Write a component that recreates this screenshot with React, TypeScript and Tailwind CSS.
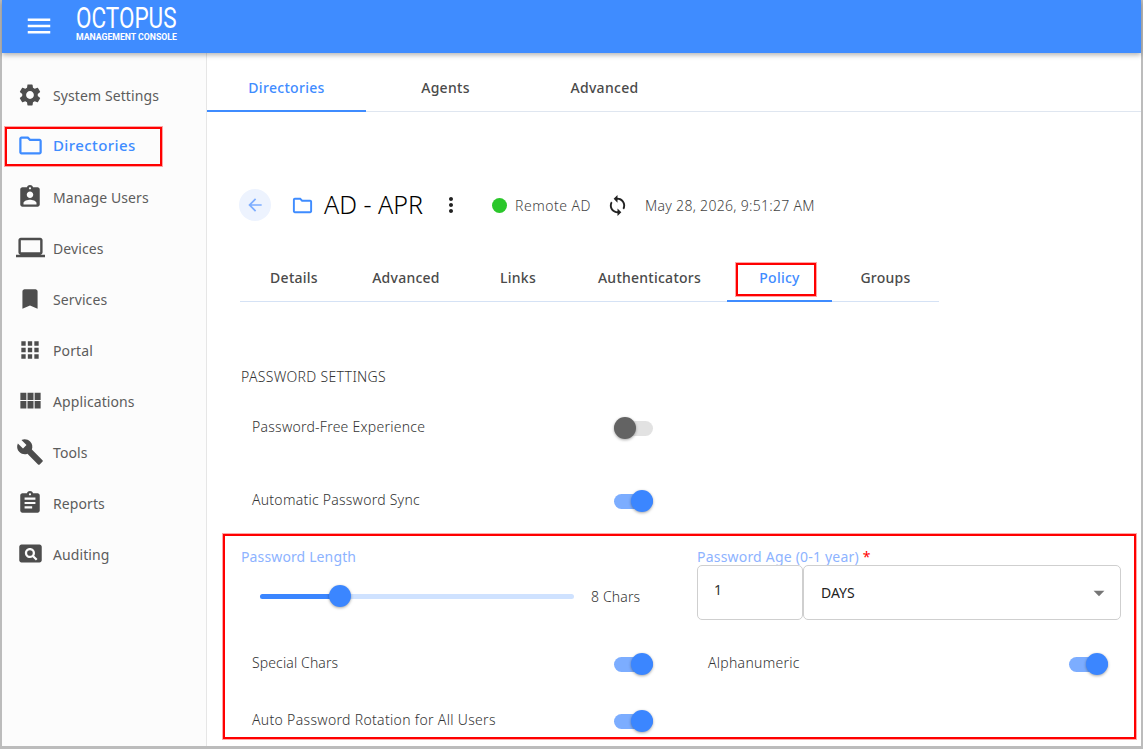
import React from "react";
import {
  MdMenu, MdSettings, MdOutlineFolder, MdAssignmentInd, MdLaptop, MdBookmark, MdApps, MdViewModule,
  MdBuild, MdAssignment, MdPageview, MdArrowBack, MdMoreVert, MdSync, MdArrowDropDown,
} from "react-icons/md";

const NAV = [
  { label: "System Settings", icon: MdSettings, size: 26 },
  { label: "Directories", icon: MdOutlineFolder, size: 27, active: true },
  { label: "Manage Users", icon: MdAssignmentInd, size: 26 },
  { label: "Devices", icon: MdLaptop, size: 29 },
  { label: "Services", icon: MdBookmark, size: 26 },
  { label: "Portal", icon: MdApps, size: 26 },
  { label: "Applications", icon: MdViewModule, size: 27 },
  { label: "Tools", icon: MdBuild, size: 28 },
  { label: "Reports", icon: MdAssignment, size: 26 },
  { label: "Auditing", icon: MdPageview, size: 27 },
];

const SUBTABS = [
  { label: "Details", w: "w-[108px]" },
  { label: "Advanced", w: "w-[116px]" },
  { label: "Links", w: "w-[108px]" },
  { label: "Authenticators", w: "w-[155px]" },
  { label: "Policy", w: "w-[105px]", active: true },
  { label: "Groups", w: "w-[107px]" },
];

function Toggle({ on }: { on: boolean }) {
  return (
    <div className={`relative h-[15px] w-[39px] shrink-0 rounded-full ${on ? "bg-[#7cadff]" : "bg-[#e2e2e2]"}`}>
      <div
        className={`absolute top-[-3.5px] h-[22px] w-[22px] rounded-full shadow-[0_1px_3px_rgba(0,0,0,0.35)] ${
          on ? "right-0 bg-[#3b86ff]" : "left-0 bg-[#636363]"
        }`}
      />
    </div>
  );
}

function Row({ label, on, className }: { label: string; on: boolean; className: string }) {
  return (
    <div className={`flex h-[40px] items-center justify-between text-[14px] font-light text-[#333] ${className}`}>
      <span className="mb-[4px]">{label}</span>
      <Toggle on={on} />
    </div>
  );
}

export default function App() {
  return (
    <div className="flex h-[749px] w-[1143px] flex-col overflow-hidden bg-[#bcbcbc] pb-[3px] pl-[2px] pr-[2px] font-['Noto_Sans',sans-serif]">
      <header className="relative z-10 flex h-[53px] shrink-0 items-center bg-[#3f8cff] pl-[22px] text-white shadow-[0_2px_5px_rgba(0,0,0,0.3)]">
        <MdMenu size={30} className="mb-[2px]" />
        <div className="mb-[9px] ml-[22px] flex w-[104px] flex-col">
          <span className="origin-left scale-x-[0.75] whitespace-nowrap font-['Roboto',sans-serif] text-[30px] font-normal leading-[29px]">
            OCTOPUS
          </span>
          <span className="whitespace-nowrap font-['Roboto',sans-serif] text-[8.7px] font-bold leading-[10px]">
            MANAGEMENT CONSOLE
          </span>
        </div>
      </header>

      <div className="flex min-h-0 flex-1">
        <aside className="w-[205px] shrink-0 border-r border-[#e6e6e6] bg-[#fcfcfc] pt-[16px]">
          {NAV.map((n) => {
            const Icon = n.icon;
            return (
              <div key={n.label} className="relative flex h-[51px] items-center">
                <div className="flex w-[51px] shrink-0 justify-center pl-[5px]">
                  <Icon size={n.size} className={n.active ? "text-[#3f8cff]" : "text-[#4d4d4d]"} />
                </div>
                <span
                  className={
                    n.active
                      ? "text-[15px] font-medium tracking-[0.4px] text-[#3f8cff]"
                      : "mt-[1px] text-[14px] tracking-[0.1px] text-[#5c5c5c]"
                  }
                >
                  {n.label}
                </span>
                {n.active && (
                  <div className="absolute left-[3px] top-[7px] h-[39px] w-[157px] border-2 border-[#f00] shadow-[0_0_0_1px_rgba(255,0,0,0.35)]" />
                )}
              </div>
            );
          })}
        </aside>

        <main className="min-w-0 flex-1 overflow-hidden bg-white">
          <nav className="flex h-[59px] border-b border-[#dfe6f0]">
            {["Directories", "Agents", "Advanced"].map((t, i) => (
              <div
                key={t}
                className={`flex w-[159px] items-center justify-center pt-[11px] text-[14px] font-medium tracking-[0.3px] ${
                  i === 0 ? "mb-[-1px] border-b-2 border-[#3f8cff] text-[#3f8cff]" : "text-[#4a4a4a]"
                }`}
              >
                {t}
              </div>
            ))}
          </nav>

          <div className="pl-[33px]">
            <div className="ml-[-1px] mt-[77px] flex h-[32px] items-center">
              <div className="flex h-[32px] w-[32px] shrink-0 items-center justify-center rounded-full bg-[#edf3fe]">
                <MdArrowBack size={20} className="text-[#7cadff]" />
              </div>
              <MdOutlineFolder size={23} className="ml-[20px] shrink-0 text-[#3f8cff]" />
              <span className="ml-[10px] w-[100px] shrink-0 whitespace-nowrap text-[25px] font-light text-black">AD - APR</span>
              <MdMoreVert size={24} className="ml-[15px] shrink-0 text-[#222]" />
              <span className="ml-[29px] h-[15px] w-[15px] shrink-0 rounded-full bg-[#2bc72b]" />
              <span className="ml-[8px] w-[76px] shrink-0 whitespace-nowrap text-[14px] font-light tracking-[0.5px] text-[#444]">Remote AD</span>
              <MdSync size={23} className="ml-[15px] shrink-0 text-[#222]" />
              <span className="ml-[16px] whitespace-nowrap text-[14px] font-light tracking-[0.3px] text-[#444]">May 28, 2026, 9:51:27 AM</span>
            </div>

            <div className="mt-[33px] flex h-[48px] w-[699px] border-b border-[#d5e2f5]">
              {SUBTABS.map((t) => (
                <div
                  key={t.label}
                  className={`relative flex shrink-0 items-center justify-center text-[14px] font-medium tracking-[0.25px] ${t.w} ${
                    t.active ? "mb-[-1px] border-b-2 border-[#3f8cff] text-[#3f8cff]" : "text-[#4a4a4a]"
                  }`}
                >
                  {t.label}
                  {t.active && (
                    <div className="absolute left-[9px] top-[9px] h-[33px] w-[80px] border-2 border-[#f00] shadow-[0_0_0_1px_rgba(255,0,0,0.35)]" />
                  )}
                </div>
              ))}
            </div>

            <div className="ml-[1px] mt-[65px] h-[20px] text-[14px] font-light leading-[20px] tracking-[0.33px] text-[#333]">
              PASSWORD SETTINGS
            </div>
            <Row label="Password-Free Experience" on={false} className="ml-[12px] mt-[21px] w-[401px] tracking-[0.25px]" />
            <Row label="Automatic Password Sync" on className="ml-[12px] mt-[33px] w-[401px] tracking-[0.25px]" />

            <section className="ml-[-17px] mt-[13px] h-[205px] w-[913px] border-2 border-[#f00] pt-[12px] shadow-[0_0_0_1px_rgba(255,0,0,0.35)]">
              <div className="flex h-[72px]">
                <div className="ml-[16px] w-[456px]">
                  <div className="h-[18px] text-[14px] leading-[18px] tracking-[0.13px] text-[#8db3ff]">Password Length</div>
                  <div className="mt-[19px] flex h-[22px] items-center pl-[19px]">
                    <div className="relative h-[5px] w-[314px] rounded-full bg-[#cfe2ff]">
                      <div className="h-[5px] w-[80px] rounded-full bg-[#3b86ff]" />
                      <div className="absolute left-[69px] top-[-8.5px] h-[22px] w-[22px] rounded-full bg-[#3b86ff] shadow-[0_1px_3px_rgba(0,0,0,0.35)]" />
                    </div>
                    <span className="ml-[17px] whitespace-nowrap text-[14px] font-light tracking-[0.15px] text-[#333]">8 Chars</span>
                  </div>
                </div>
                <div className="w-[424px]">
                  <div className="h-[17px] whitespace-nowrap text-[14px] leading-[18px] tracking-[0.2px] text-[#8db3ff]">
                    Password Age (0-1 year) <span className="text-[#f00]">*</span>
                  </div>
                  <div className="flex h-[55px]">
                    <div className="w-[106px] rounded-[5px] border border-[#cfcfcf] pl-[16px] pt-[14px] text-[14px] leading-[20px] text-[#333]">
                      1
                    </div>
                    <div className="flex w-[318px] items-center justify-between rounded-[5px] border border-[#cfcfcf] pl-[17px] pr-[8px] text-[14px] text-[#222]">
                      <span>DAYS</span>
                      <MdArrowDropDown size={26} className="text-[#757575]" />
                    </div>
                  </div>
                </div>
              </div>
              <div className="mt-[24px] flex">
                <Row label="Special Chars" on className="ml-[27px] w-[401px] tracking-[0.12px]" />
                <Row label="Alphanumeric" on className="ml-[55px] w-[400px] tracking-[0.28px]" />
              </div>
              <Row label="Auto Password Rotation for All Users" on className="ml-[27px] mt-[17px] w-[401px] tracking-[0.32px]" />
            </section>
          </div>
        </main>
      </div>
    </div>
  );
}
